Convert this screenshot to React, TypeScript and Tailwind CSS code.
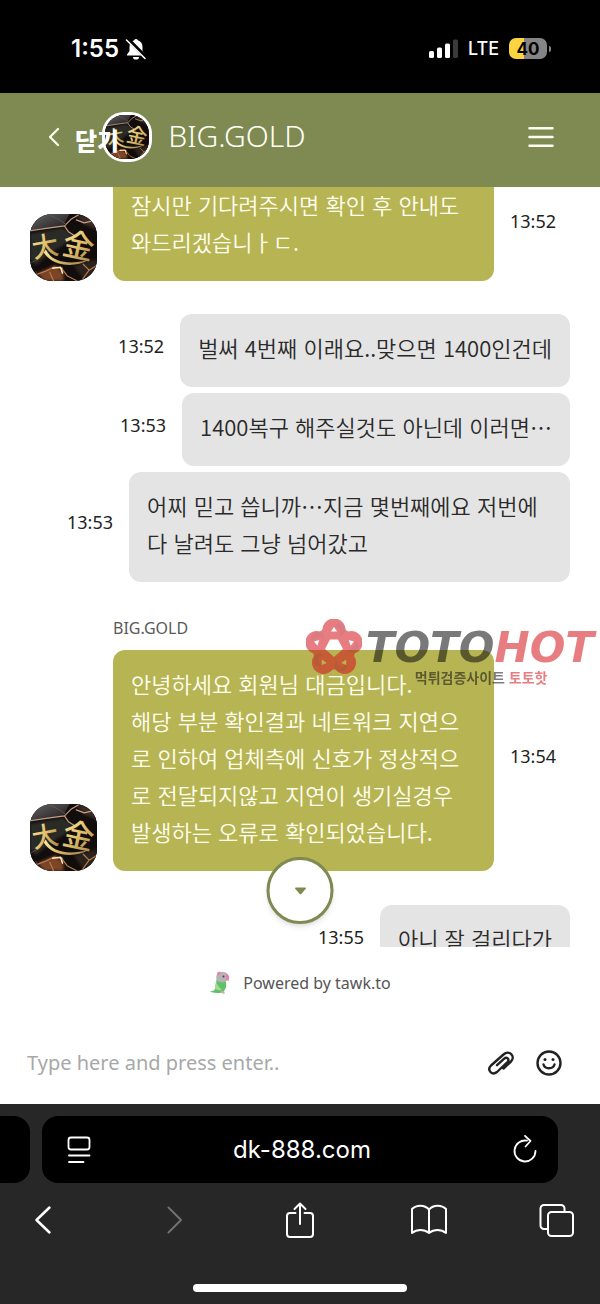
import { ReactNode } from "react";
import { clsx } from "clsx";

interface Message {
    from: "agent" | "visitor";
    text: string;
    time: string;
    name?: string;
    gap?: string;
}

const messages: Message[] = [
    { from: "agent", text: "잠시만 기다려주시면 확인 후 안내도와드리겠습니ㅏㄷ.", time: "13:52" },
    { from: "visitor", text: "벌써 4번째 이래요..맞으면 1400인건데", time: "13:52", gap: "mt-[33px]" },
    { from: "visitor", text: "1400복구 해주실것도 아닌데 이러면…", time: "13:53", gap: "mt-1.5" },
    { from: "visitor", text: "어찌 믿고 씁니까…지금 몇번째에요 저번에 다 날려도 그냥 넘어갔고", time: "13:53", gap: "mt-1.5" },
    {
        from: "agent",
        name: "BIG.GOLD",
        text: "안녕하세요 회원님 대금입니다.\n해당 부분 확인결과 네트워크 지연으로 인하여 업체측에 신호가 정상적으로 전달되지않고 지연이 생기실경우 발생하는 오류로 확인되었습니다.",
        time: "13:54",
        gap: "mt-[34px]",
    },
    { from: "visitor", text: "아니 잘 걸리다가", time: "13:55", gap: "mt-[34px]" },
];

const Avatar = ({ id, className }: { id: string; className?: string }) => (
    <svg viewBox="0 0 68 68" className={clsx("shrink-0 bg-[#0d0a09]", className)} role="img" aria-label="BIG.GOLD">
        <defs>
            <linearGradient id={`${id}-gold`} x1="0" y1="0" x2="1" y2="1">
                <stop offset="0" stopColor="#fff0a8" />
                <stop offset="0.5" stopColor="#e2c06c" />
                <stop offset="1" stopColor="#9a7a48" />
            </linearGradient>
            <linearGradient id={`${id}-haze`} x1="0" y1="0" x2="1" y2="1">
                <stop offset="0" stopColor="#8b8a8c" />
                <stop offset="1" stopColor="#1b1819" />
            </linearGradient>
            <filter id={`${id}-soft`}>
                <feGaussianBlur stdDeviation="1.6" />
            </filter>
        </defs>
        <rect width="68" height="68" fill="#110d0c" />
        <path d="M0 0h40l-6 12L0 18z" fill={`url(#${id}-haze)`} opacity="0.7" />
        <g filter={`url(#${id}-soft)`}>
            <path d="M0 20 34 14 46 24 20 40 6 52 0 46z" fill="#2b2928" />
            <path d="M8 60 26 52 34 60 34 68 14 68z" fill="#7b4526" />
            <path d="M46 0 68 4 68 16 54 10z" fill="#3a2a25" />
            <path d="M44 52 68 46 68 60 54 66z" fill="#2c211d" />
        </g>
        <g fill="none" strokeLinecap="round" strokeLinejoin="round">
            <path d="M0 17 20 14 35 12 42 5 49 1M35 12l4 6 8 5M47 6l8 3 13-3" stroke="#c79c80" strokeWidth="1.2" />
            <path d="M18 0 30 6 37 11" stroke="#6b5a52" strokeWidth="0.8" />
            <path d="M5 62 16 58 24 54 33 55M20 59l4 9M32 55l6 8 10 5M52 68l8-11 8-5M60 57l-6-6" stroke="#b97a4c" strokeWidth="1.2" />
            <path d="M23 55 31 54 33 60" stroke="#ffe6c0" strokeWidth="1.6" />
            <path d="M0 50 8 46M10 68 6 58" stroke="#5f4a40" strokeWidth="0.8" />
        </g>
        <path d="M16 36c6 12 20 16 43 11-14 8-37 6-45-8z" fill={`url(#${id}-gold)`} />
        <g fill={`url(#${id}-gold)`} fontWeight="500" className="font-['Noto_Sans_CJK_TC',sans-serif]">
            <text x="2" y="43" fontSize="27" transform="rotate(-10 14 34)">大</text>
            <text x="33" y="44" fontSize="32" transform="rotate(12 50 34)">金</text>
        </g>
    </svg>
);

const Bubble = ({ message, index, children }: { message: Message; index: number; children?: ReactNode }) => {
    const isAgent = message.from === "agent";

    return (
        <div className={message.gap}>
            {message.name && (
                <p className="pl-[83px] pb-2.5 text-base leading-6 text-[#5a5a5a] font-['Noto_Sans',sans-serif]">
                    {message.name}
                </p>
            )}
            <div className={clsx("relative flex items-end gap-4", !isAgent && "flex-row-reverse")}>
                {isAgent && <Avatar id={`agent-${index}`} className="size-[67px] rounded-[22px]" />}
                <p
                    className={clsx(
                        "whitespace-pre-line rounded-xl px-[18px] pt-[15px] pb-[21px] text-[22px] leading-[37px] font-[350] font-['Noto_Sans_CJK_KR',sans-serif]",
                        isAgent ? "max-w-[381px] bg-[#b7b454] text-[#fffff0]" : "max-w-[441px] bg-[#e4e4e4] text-[#2a2a2a]"
                    )}
                >
                    {message.text}
                </p>
                <time className="self-center pb-2.5 text-lg leading-6 text-[#222] font-['Noto_Sans',sans-serif]">
                    {message.time}
                </time>
                {children}
            </div>
        </div>
    );
};

const lobes = [0, 72, 144, 216, 288];

const Watermark = () => (
    <div className="pointer-events-none absolute -top-[31px] -right-6 flex items-start opacity-55">
        <svg viewBox="0 0 56 56" className="size-14">
            <mask id="knot">
                <g fill="#fff" stroke="#fff" strokeWidth="14" strokeLinejoin="round">
                    <path d="M28 11 45 23.500 38.500 43.500H17.500L11 23.500z" />
                    {lobes.map((a) => (
                        <circle key={a} cx="28" cy="11" r="4.500" transform={`rotate(${a} 28 29)`} />
                    ))}
                </g>
                <path d="M24 20.500h8l5 9.500-9 8-9-8z" fill="#000" />
                {lobes.map((a) => (
                    <path key={a} d="M28 8l3 4.500h-6z" fill="#000" transform={`rotate(${a} 28 29)`} />
                ))}
            </mask>
            <g mask="url(#knot)">
                <rect width="56" height="56" fill="#d5141c" />
                {lobes.map((a) => (
                    <path
                        key={a}
                        d="M27 8C29 3 38 3 39 11c0 4-4 7-6 6 3-5 0-10-6-9z"
                        fill="#7d1020"
                        opacity="0.3"
                        transform={`rotate(${a} 28 29)`}
                    />
                ))}
            </g>
        </svg>
        <div className="flex flex-col pt-2 pl-1">
            <span className="text-[42px] leading-[42px] font-bold italic text-[#0d0d0d] font-['DejaVu_Sans',sans-serif]">
                TOTO<span className="text-[#d5141c]">HOT</span>
            </span>
            <span className="pl-[49px] text-sm leading-4 font-bold text-[#111] font-['Noto_Sans_CJK_KR',sans-serif]">
                먹튀검증사이트 <span className="text-[#d5141c]">토토핫</span>
            </span>
        </div>
    </div>
);

const StatusBar = () => (
    <div className="flex h-[93px] shrink-0 items-center justify-between bg-black pr-[49px] pb-1 pl-[71px] pt-2 text-white">
        <div className="flex items-center gap-1.5 text-2xl leading-7 font-semibold font-['Inter',sans-serif]">
            1:55
            <svg viewBox="0 0 22 24" className="h-6 w-[22px]">
                <path d="M11 2a2 2 0 0 1 1.800 1.200C16 4 17.500 6.500 17.500 10v4l2.500 3.500v1H2v-1L4.500 14v-4C4.500 6.500 6 4 9.200 3.200A2 2 0 0 1 11 2zM8 20h6a3 2.600 0 0 1-6 0z" fill="#fff" />
                <path d="M2 1.500 21 20.500" stroke="#000" strokeWidth="4" />
                <path d="M1.500 3 20 21.500" stroke="#fff" strokeWidth="1.600" strokeLinecap="round" />
            </svg>
        </div>
        <div className="flex items-center gap-2.5">
            <svg viewBox="0 0 30 20" className="h-5 w-[30px]" fill="#fff">
                <rect x="1" y="12" width="5" height="7" rx="1.500" />
                <rect x="9" y="8.500" width="5" height="10.500" rx="1.500" />
                <rect x="17" y="4.500" width="5" height="14.500" rx="1.500" />
                <rect x="25" y="0.500" width="5" height="18.500" rx="1.500" fill="#3a3a3a" />
            </svg>
            <span className="text-lg leading-6 font-medium font-['Inter',sans-serif]">LTE</span>
            <div className="flex items-center gap-0.5">
                <span className="flex h-[21px] w-[38px] items-center justify-center rounded-[7px] bg-linear-to-r from-[#fbd442] from-40% to-[#858585] to-40% text-[17px] leading-5 font-bold text-black font-['Inter',sans-serif]">
                    40
                </span>
                <span className="h-1.5 w-0.5 rounded-r bg-[#858585]" />
            </div>
        </div>
    </div>
);

const Header = () => (
    <header className="flex h-[94px] shrink-0 items-center bg-[#7e8a52] pr-[38px] pl-[47px] pb-1.5 text-white">
        <button aria-label="닫기" className="relative z-10 flex items-center gap-3.5">
            <svg viewBox="0 0 14 20" className="h-5 w-3.5" fill="none" stroke="#fffff0" strokeWidth="2.200" strokeLinecap="round" strokeLinejoin="round">
                <path d="M11 2 3 10l8 8" />
            </svg>
            <span className="pt-1.5 text-2xl leading-7 font-black font-['Noto_Sans_CJK_KR',sans-serif]">닫기</span>
        </button>
        <Avatar id="header" className="-ml-[17px] size-[50px] rounded-[22px] border-3 border-white" />
        <h1 className="grow pb-0.5 pl-4 text-3xl leading-9 font-light text-[#fffff4] font-['Noto_Sans',sans-serif]">BIG.GOLD</h1>
        <button aria-label="Menu" className="p-2">
            <svg viewBox="0 0 26 22" className="h-[22px] w-[26px]" stroke="#fffff0" strokeWidth="2.500" strokeLinecap="round">
                <path d="M1.500 2.200h23M1.500 11h23M1.500 19.800h23" />
            </svg>
        </button>
    </header>
);

const Parrot = () => (
    <svg viewBox="0 0 22 24" className="h-6 w-[22px]">
        <path d="M8 8C6 12 8 16 5 19.500L1 20.500c2 1.500 7 1.500 10 1.500 5-1 7-6 6-11l-3-3z" fill="#5fc267" />
        <path d="M7 10c1 4 3 6 6 9-4 1-8-1-7-4z" fill="#a5d99a" />
        <path d="M12 20h3l1 2.500h-3z" fill="#d9a5a0" />
        <path d="M8 3c3-3 9-3 11 1v5c-3 3-7 3-11 1-1-2-1-5 0-7z" fill="#b5b3b3" />
        <path d="M8 2c2-2 4-1 4 0L9 5zM17 3c3 0 4 3 2.500 7-2-1-3.500-3-2.500-7z" fill="#ec7fb0" />
        <circle cx="14.500" cy="5.500" r="1" fill="#444" />
    </svg>
);

const ToolbarButton = ({ label, disabled, children }: { label: string; disabled?: boolean; children: ReactNode }) => (
    <button aria-label={label} disabled={disabled} className="text-white disabled:text-[#707070]">
        <svg viewBox="0 0 36 40" className="h-10 w-9" fill="none" stroke="currentColor" strokeWidth="2" strokeLinecap="round" strokeLinejoin="round">
            {children}
        </svg>
    </button>
);

const BrowserBar = () => (
    <footer className="flex h-[200px] shrink-0 flex-col bg-[#272727] pt-3 pb-3 text-white">
        <div className="flex h-[67px]">
            <div className="w-[30px] rounded-r-2xl bg-black" />
            <div className="mr-[42px] ml-3 flex grow items-center justify-between rounded-2xl bg-black pr-4 pl-5">
                <button aria-label="Page menu">
                    <svg viewBox="0 0 34 34" className="size-[34px]" fill="none" stroke="#fff" strokeWidth="1.800" strokeLinecap="round">
                        <rect x="6.500" y="4.500" width="21" height="12" rx="2.500" />
                        <path d="M7 22.500h20.500M7 29h14.500" />
                    </svg>
                </button>
                <span className="text-2xl leading-8 font-['Inter',sans-serif]">dk-888.com</span>
                <button aria-label="Reload">
                    <svg viewBox="0 0 34 34" className="size-[34px]" fill="none" stroke="#fff" strokeWidth="1.800" strokeLinecap="round" strokeLinejoin="round">
                        <path d="M27.500 18A10.500 10.500 0 1 1 19 7.700M17 2.800 22.500 8 17.500 13.500" />
                    </svg>
                </button>
            </div>
        </div>
        <nav className="mt-[17px] flex justify-between px-[25px]">
            <ToolbarButton label="Back">
                <path d="M24.500 7.500 11.500 20l13 12.500" strokeWidth="2.500" />
            </ToolbarButton>
            <ToolbarButton label="Forward" disabled>
                <path d="M14.500 7.500 27 20 14.500 32.500" />
            </ToolbarButton>
            <ToolbarButton label="Share">
                <path d="M13.500 13H8a3 3 0 0 0-3 3v18a3 3 0 0 0 3 3h20a3 3 0 0 0 3-3V16a3 3 0 0 0-3-3h-5.500M18 24V3.500M12.500 9l5.500-5.500L23.500 9" />
            </ToolbarButton>
            <ToolbarButton label="Bookmarks">
                <path d="M18 9.500C13.500 4.500 5.500 4.500 1 9v24c5-4 12-4 17 0 5-4 12-4 17 0V9c-4.500-4.500-12.500-4.500-17 .500zM18 9.500V33" />
            </ToolbarButton>
            <ToolbarButton label="Tabs">
                <rect x="9" y="12" width="25" height="24" rx="3.500" />
                <path d="M8.500 29H5a3.500 3.500 0 0 1-3.500-3.500V8.500A3.500 3.500 0 0 1 5 5h17a3.500 3.500 0 0 1 3.500 3.500v3" />
            </ToolbarButton>
        </nav>
        <div className="mx-auto mt-auto h-2 w-[214px] rounded-full bg-white" />
    </footer>
);

export default function App() {
    return (
        <div lang="ko" className="flex h-screen flex-col overflow-hidden bg-white">
            <StatusBar />
            <Header />
            <main className="relative min-h-0 grow overflow-hidden px-[30px]">
                {/* the list is scrolled a little past its first bubble's top edge */}
                <div className="-mt-4">
                    {messages.map((message, i) => (
                        <Bubble key={i} message={message} index={i}>
                            {message.name && <Watermark />}
                        </Bubble>
                    ))}
                </div>
                <button
                    aria-label="Scroll to latest"
                    className="absolute bottom-[23px] left-1/2 flex size-[67px] -translate-x-1/2 items-center justify-center rounded-full border-3 border-[#7e8a52] bg-white shadow-md"
                >
                    <svg viewBox="0 0 12 8" className="h-2 w-3" fill="#7e8a52">
                        <path d="M1.500.500h9c1 0 1.200.800.600 1.500L7 6.800a1.300 1.300 0 0 1-2 0L.900 2C.300 1.300.500.500 1.500.500z" />
                    </svg>
                </button>
            </main>
            <a href="#tawk" className="flex h-[72px] shrink-0 items-center justify-center gap-3 text-base leading-6 text-[#555] font-['Noto_Sans',sans-serif]">
                <Parrot />
                Powered by tawk.to
            </a>
            <form className="flex h-[85px] shrink-0 items-center gap-5 pt-0.5 pr-[37px] pl-[27px]">
                <input
                    type="text"
                    aria-label="Message"
                    placeholder="Type here and press enter.."
                    className="min-w-0 grow bg-transparent text-xl leading-7 outline-none placeholder:text-[#a8a8a8] font-['Noto_Sans',sans-serif]"
                />
                <button type="button" aria-label="Attach file">
                    <svg viewBox="0 0 28 28" className="size-7" fill="none" stroke="#222" strokeWidth="2.400" strokeLinecap="round" strokeLinejoin="round">
                        <path d="M16.500 19.500 24 12.500c5-5.500-2-12-7.500-7L4 16.500c-4.500 4.500 1 10.500 6 6.500L20.500 13c2.500-2.800-.800-5.500-3.300-3.400L10 16.200" />
                    </svg>
                </button>
                <button type="button" aria-label="Emoji">
                    <svg viewBox="0 0 28 28" className="size-7" fill="none" stroke="#222" strokeWidth="2.400" strokeLinecap="round">
                        <circle cx="14" cy="14" r="11.500" />
                        <path d="M8.500 15.500c1.500 5 9.500 5 11 0" />
                        <circle cx="10" cy="10.500" r="1.500" fill="#222" stroke="none" />
                        <circle cx="18" cy="10.500" r="1.500" fill="#222" stroke="none" />
                    </svg>
                </button>
            </form>
            <BrowserBar />
        </div>
    );
}
